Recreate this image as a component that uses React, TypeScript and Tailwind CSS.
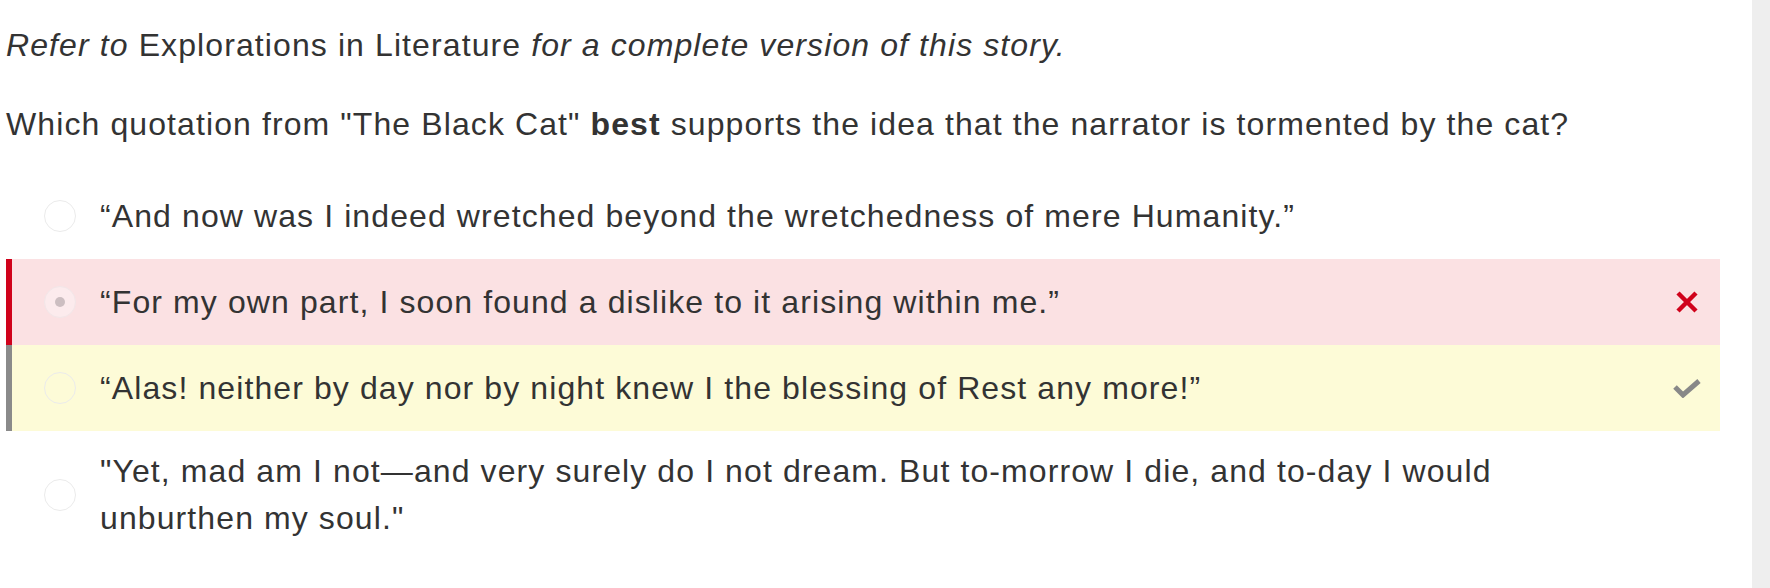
import React from 'react';

type Option = {
  text: string;
  state?: 'wrong' | 'correct';
};

const options: Option[] = [
  { text: '\u201CAnd now was I indeed wretched beyond the wretchedness of mere Humanity.\u201D' },
  { text: '\u201CFor my own part, I soon found a dislike to it arising within me.\u201D', state: 'wrong' },
  { text: '\u201CAlas! neither by day nor by night knew I the blessing of Rest any more!\u201D', state: 'correct' },
  {
    text: '"Yet, mad am I not\u2014and very surely do I not dream. But to-morrow I die, and to-day I would unburthen my soul."',
  },
];

const Radio: React.FC<{ selected?: boolean }> = ({ selected }) => (
  <div
    className={`w-[32px] h-[32px] shrink-0 rounded-full border-[1.5px] flex items-center justify-center ${
      selected ? 'border-[#f2e6e8] bg-[#fcebed]' : 'border-[#ebebeb]'
    }`}
  >
    {selected && <div className="w-[10px] h-[10px] rounded-full bg-[#ccbec1]" />}
  </div>
);

const CrossIcon = () => (
  <svg width="24" height="24" viewBox="0 0 24 24">
    <path d="M3 3 L21 21 M21 3 L3 21" stroke="#d0021b" strokeWidth="4.5" />
  </svg>
);

const CheckIcon = () => (
  <svg width="28" height="20" viewBox="0 0 28 20">
    <path d="M2 9 L10 17 L26 3" stroke="#888888" strokeWidth="5" fill="none" />
  </svg>
);

const App: React.FC = () => {
  return (
    <div
      className="flex w-full h-[588px] bg-white text-[#333333] tracking-[1.1px]"
      style={{ fontFamily: '"Liberation Sans", Arial, sans-serif' }}
    >
      <div className="flex-1 pl-[6px] pr-[32px] pt-[22px] text-[32px] leading-[47px]">
        <p>
          <i>Refer to</i> Explorations in Literature <i>for a complete version of this story.</i>
        </p>
        <p className="mt-[32px]">
          Which quotation from "The Black Cat" <b>best</b> supports the idea that the narrator is tormented by the cat?
        </p>
        <div className="mt-[25px]">
          {options.map((o, i) => {
            const rowClass =
              o.state === 'wrong'
                ? 'bg-[#fbe1e3] border-[#d0021b]'
                : o.state === 'correct'
                ? 'bg-[#fdfbd7] border-[#8a8a8a]'
                : 'border-transparent';
            const last = i === options.length - 1;
            return (
              <div
                key={i}
                className={`flex items-center border-l-[6px] pl-[32px] pr-[19px] ${rowClass} ${last ? 'py-[17px]' : 'h-[86px]'}`}
              >
                <Radio selected={o.state === 'wrong'} />
                <div className="flex-1 ml-[24px] pr-[100px]">{o.text}</div>
                <div className="w-[28px] flex justify-center">
                  {o.state === 'wrong' && <CrossIcon />}
                  {o.state === 'correct' && <CheckIcon />}
                </div>
              </div>
            );
          })}
        </div>
      </div>
      <div className="w-[18px] bg-[#eeeeee]" />
    </div>
  );
};

export default App;
